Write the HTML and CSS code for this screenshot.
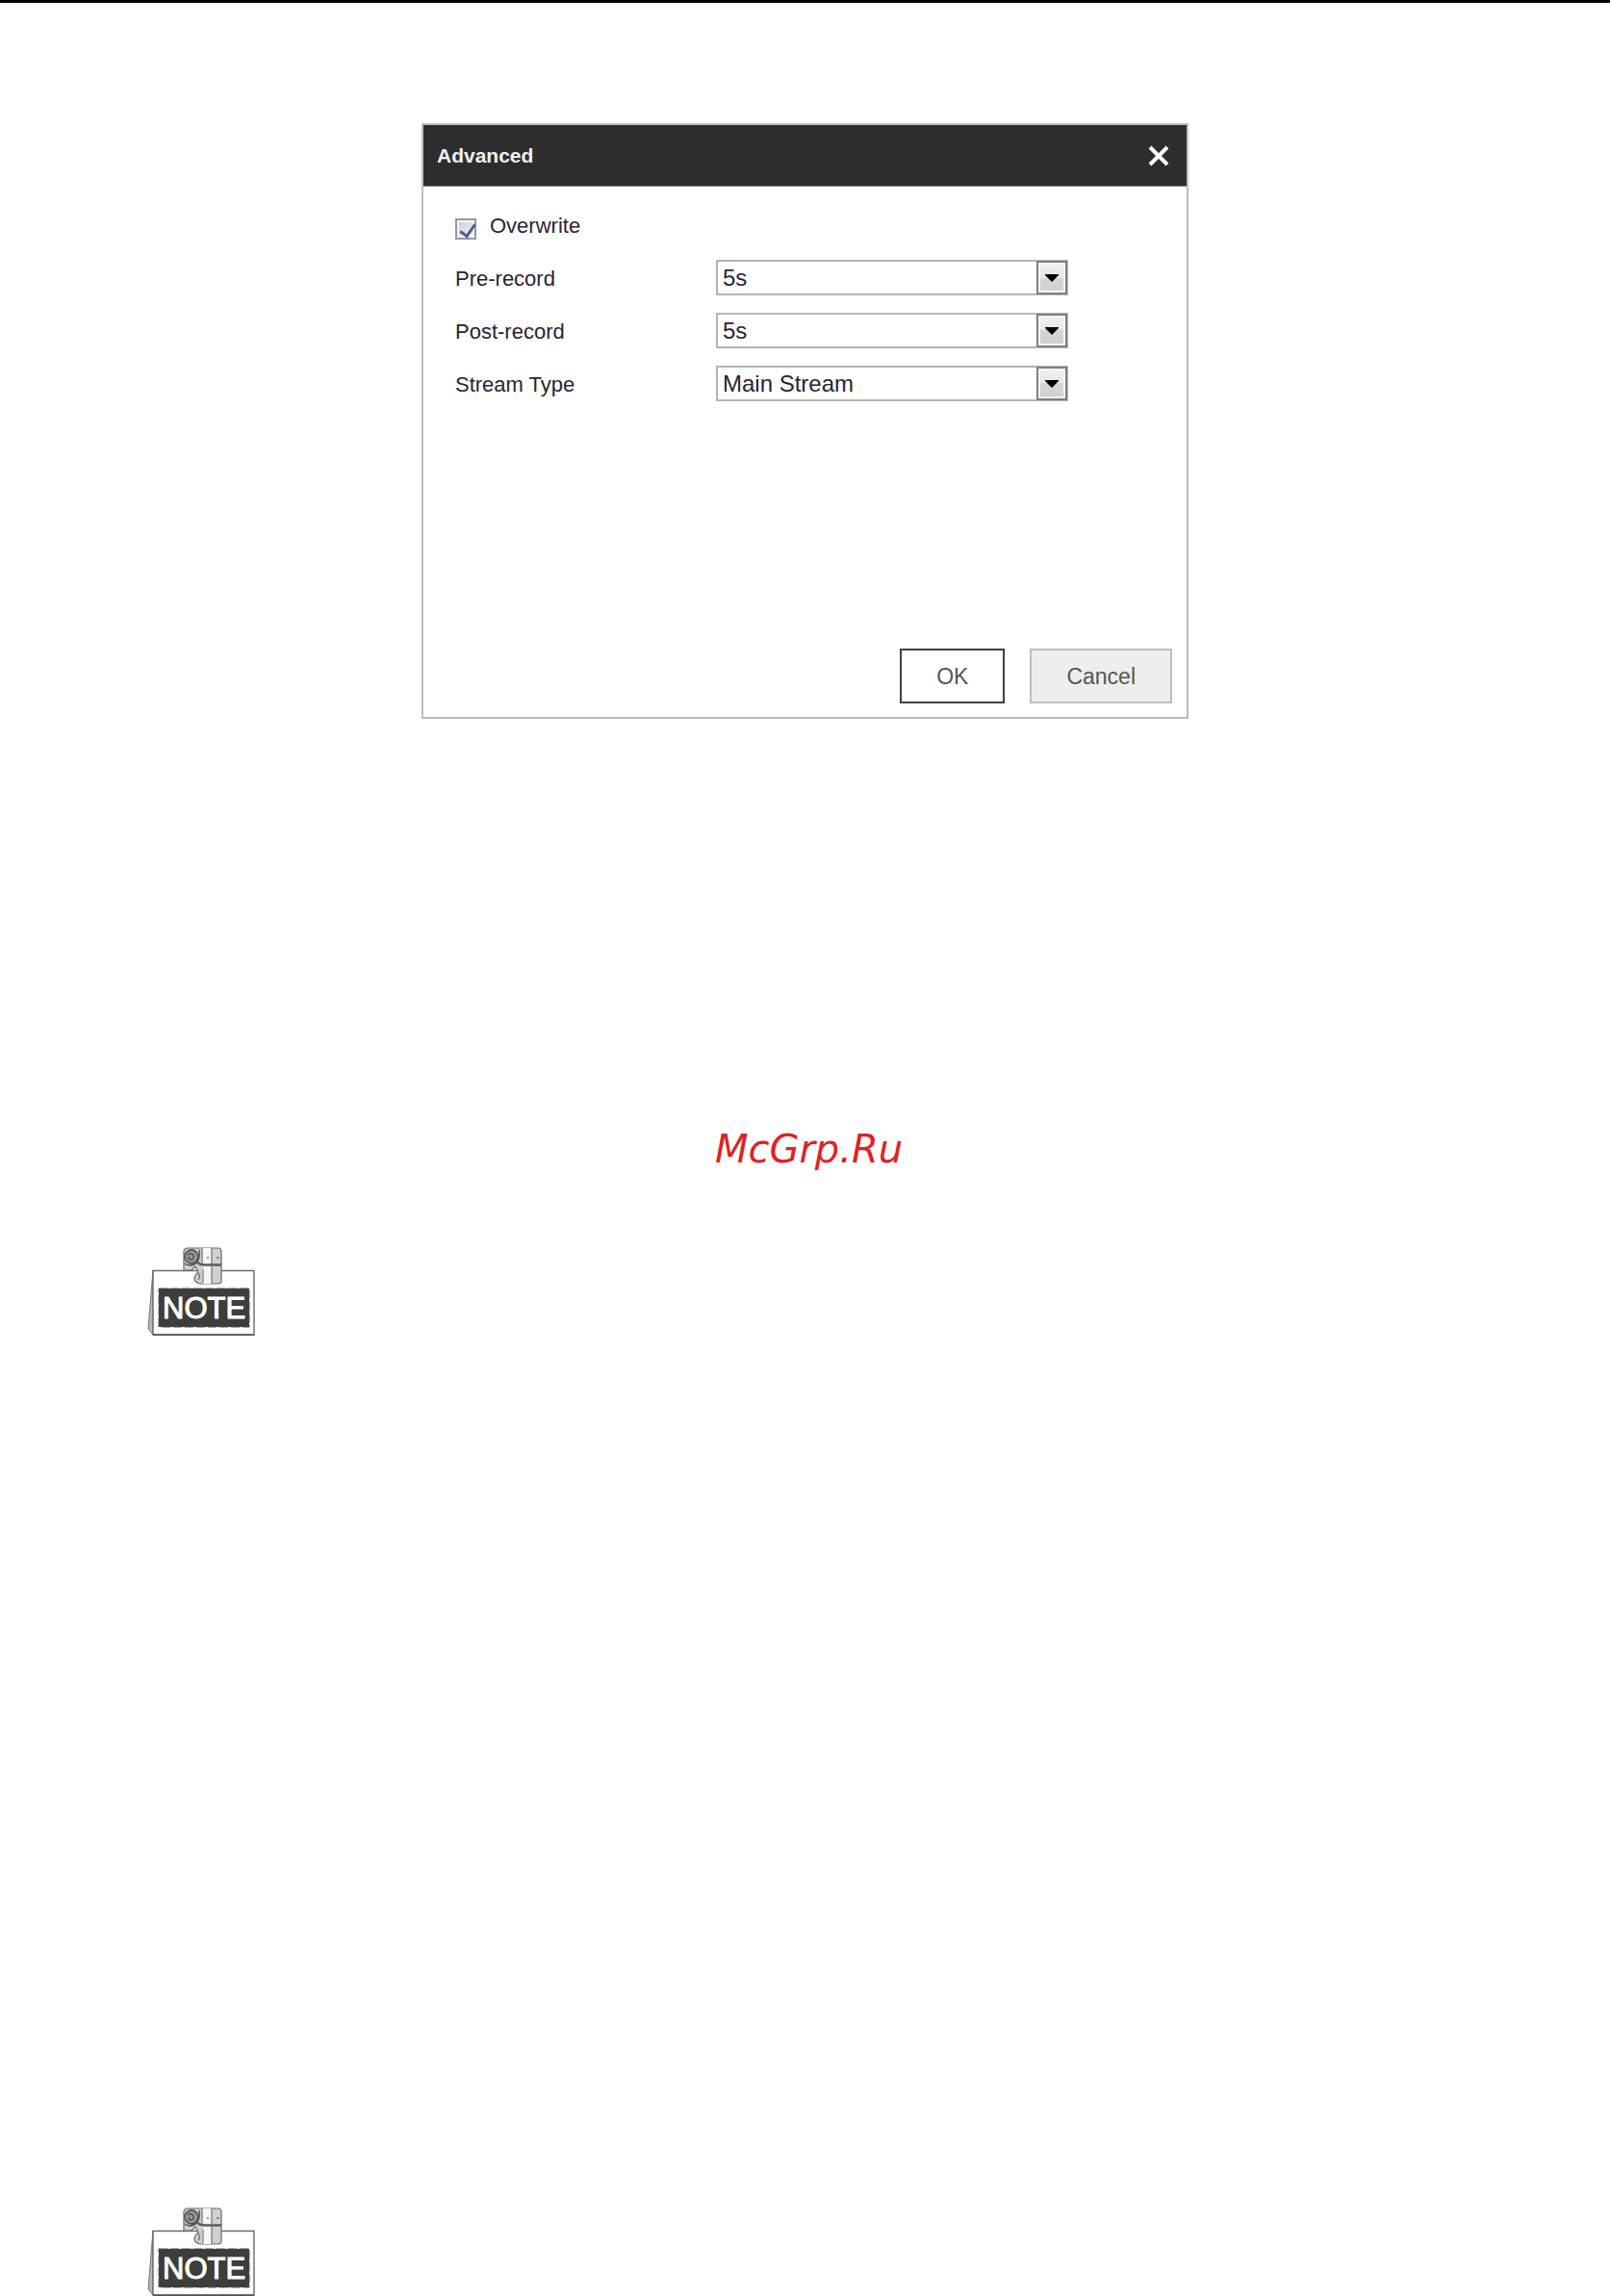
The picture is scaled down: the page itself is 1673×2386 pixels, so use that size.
FILE: index.html
```html
<!DOCTYPE html>
<html lang="en">
<head>
<meta charset="utf-8">
<meta name="viewport" content="width=device-width, initial-scale=1">
<title>Advanced</title>
<link rel="stylesheet" href="styles.css">
</head>
<body>
<svg class="symbols" aria-hidden="true">
  <symbol id="note-sign" viewBox="0 0 112 92">
    <path d="M6 24 L1 85 L6 91 Z" fill="#b8b8b8" stroke="#777" stroke-width="1"/>
    <path d="M6 24.5 H111 V91 H6 Z" fill="#fff" stroke="#6a6a6a" stroke-width="1.4"/>
    <path d="M6 91.2 H111" stroke="#555" stroke-width="1.6"/>
    <rect x="12" y="43" width="94" height="40" fill="#3d3d3d"/>
    <path d="M12 43 H106 V83 H12 Z" fill="none" stroke="#555" stroke-width="1" stroke-dasharray="9 3"/>
    <text class="note-text" x="16" y="74">NOTE</text>
    <path d="M38 24 V5 Q38 1 42 1 H74 Q77 1 77 5 V35 Q77 38 73 38 H55 Q49 37 49 32 Q50 28 53 26 L50 20 L46 24 Z" fill="#d0d0d0" stroke="#686868" stroke-width="1.2"/>
    <path d="M58 1 H66 V38 H58 Z" fill="#f7f7f7"/>
    <path d="M67 2 V37 M57 2 V17 M58 23 V37" fill="none" stroke="#808080" stroke-width="1.2"/>
    <path d="M52 16 Q56 19 60 18.500 H77" fill="none" stroke="#5c5c5c" stroke-width="2.400"/>
    <circle cx="46" cy="10" r="7" fill="#999" stroke="#585858" stroke-width="1.8"/>
    <path d="M42 8 Q46 5 48 9 Q49 13 45 13 Q42 12 44 10 M39 17 Q46 22 52 15 Q55 11 54 3" fill="none" stroke="#4f4f4f" stroke-width="1.5"/>
    <path d="M53 27 Q56 31 53 34 M72 11 H75 M62 11 H64" fill="none" stroke="#777" stroke-width="1.4"/>
  </symbol>
  <symbol id="arrow-down" viewBox="0 0 14 8">
    <path d="M0 0 H14 V1 L7 8 L0 1 Z" fill="#000"/>
  </symbol>
</svg>

<main class="page">
  <form class="dialog" role="dialog" aria-labelledby="dialog-title">
    <header class="dialog-header">
      <h1 class="dialog-title" id="dialog-title">Advanced</h1>
      <button class="close" type="button" aria-label="Close">
        <svg class="close-icon" viewBox="0 0 22 22" aria-hidden="true"><path d="M2 2 L20 20 M20 2 L2 20" stroke="#fff" stroke-width="4"/></svg>
      </button>
    </header>
    <div class="fields">
      <div class="check-row">
        <input class="check" type="checkbox" id="overwrite" checked>
        <label for="overwrite">Overwrite</label>
      </div>
      <div class="field">
        <label for="pre-record">Pre-record</label>
        <div class="select">
          <select class="select-input" id="pre-record"><option>5s</option></select>
          <span class="select-arrow"><svg class="arrow-icon" aria-hidden="true"><use href="#arrow-down"/></svg></span>
        </div>
      </div>
      <div class="field">
        <label for="post-record">Post-record</label>
        <div class="select">
          <select class="select-input" id="post-record"><option>5s</option></select>
          <span class="select-arrow"><svg class="arrow-icon" aria-hidden="true"><use href="#arrow-down"/></svg></span>
        </div>
      </div>
      <div class="field">
        <label for="stream-type">Stream Type</label>
        <div class="select">
          <select class="select-input" id="stream-type"><option>Main Stream</option></select>
          <span class="select-arrow"><svg class="arrow-icon" aria-hidden="true"><use href="#arrow-down"/></svg></span>
        </div>
      </div>
    </div>
    <footer class="actions">
      <button class="button button-ok" type="submit">OK</button>
      <button class="button button-cancel" type="button">Cancel</button>
    </footer>
  </form>

  <p class="site-mark">McGrp.Ru</p>

  <section class="notes">
    <svg class="note" role="img" aria-label="Note"><use href="#note-sign"/></svg>
    <svg class="note" role="img" aria-label="Note"><use href="#note-sign"/></svg>
  </section>
</main>
</body>
</html>
```
FILE: styles.css
```css
* {
  box-sizing: border-box;
}

body {
  margin: 0;
  background: #fff;
  color: #2c2233;
  font-family: "Liberation Sans", Arial, sans-serif;
  font-size: 22px;
}

.symbols {
  display: none;
}

.page {
  display: flex;
  flex-direction: column;
  align-items: center;
  padding-top: 125px;
  border-top: 3px solid #000;
}

.dialog {
  display: flex;
  flex-direction: column;
  width: 100%;
  max-width: 797px;
  border: 2px solid #bdbdbd;
}

.dialog-header {
  display: flex;
  align-items: center;
  justify-content: space-between;
  height: 64px;
  padding: 0 18px 0 14px;
  background: #2d2d2d;
  border-bottom: 1px solid #8a8a8a;
}

.dialog-title {
  margin: 0;
  color: #f2f2f2;
  font-size: 21px;
}

.close {
  display: flex;
  padding: 0;
  border: 0;
  background: none;
}

.close-icon {
  width: 22px;
  height: 22px;
}

.fields {
  display: flex;
  flex-direction: column;
  gap: 18px;
  padding: 24px 32px 0 33px;
}

.check-row {
  display: flex;
  align-items: center;
  gap: 14px;
  height: 34px;
}

.check {
  appearance: none;
  width: 22px;
  height: 22px;
  margin: 5px 0 0;
  border: 2px solid #999;
  background: linear-gradient(135deg, #c8ccd2, #f8f8f8) center / 14px 14px no-repeat #f4f4f4;
}

.check:checked::before {
  content: "";
  display: block;
  width: 7px;
  height: 13px;
  margin: 1px 0 0 6px;
  border: solid #4a5f9e;
  border-width: 0 3px 3px 0;
  transform: rotate(35deg);
}

.field {
  display: grid;
  grid-template-columns: 271px minmax(0, 366px);
  align-items: baseline;
}

.select {
  display: grid;
  grid-template-columns: 1fr 33px;
  height: 37px;
}

.select-input {
  grid-area: 1 / 1 / 2 / 3;
  appearance: none;
  padding: 0 40px 0 5px;
  border: 2px solid #b4b4b8;
  border-radius: 0;
  background: #fff;
  color: #2c2233;
  font: 24px "Liberation Sans", Arial, sans-serif;
}

.select-arrow {
  grid-area: 1 / 2 / 2 / 3;
  display: flex;
  align-items: center;
  justify-content: center;
  margin: 1px 1px 1px 0;
  border: 2px solid #808080;
  background: linear-gradient(#f1f1f1, #e6e6e6 50%, #d6d6d6 50%, #cfcfcf);
  box-shadow: inset 0 0 0 2px #f6f6f6;
  pointer-events: none;
}

.arrow-icon {
  width: 14px;
  height: 8px;
}

.actions {
  display: flex;
  justify-content: flex-end;
  gap: 26px;
  margin-top: 257px;
  padding: 0 15px 14px;
}

.button {
  height: 57px;
  padding: 2px 36px 0;
  border: 2px solid;
  color: #555;
  font: 23px "Liberation Sans", Arial, sans-serif;
}

.button-ok {
  border-color: #404040;
  background: #fff;
}

.button-cancel {
  border-color: #bdbdbd;
  background: #eee;
}

.site-mark {
  margin: 423px 0 78px;
  padding-left: 8px;
  color: #dc2424;
  font: italic 40px/48px "DejaVu Sans", sans-serif;
}

.notes {
  display: flex;
  flex-direction: column;
  align-self: stretch;
  gap: 906px;
  padding-left: 153px;
}

.note {
  width: 112px;
  height: 92px;
}

.note-text {
  fill: #fff;
  stroke: #fff;
  stroke-width: 1px;
  font: 31px "Liberation Sans", Arial, sans-serif;
}
```
